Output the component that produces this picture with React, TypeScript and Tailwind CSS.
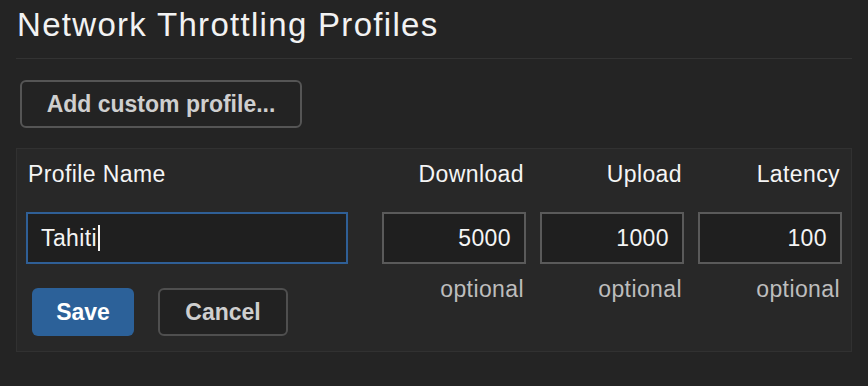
const font = "font-['Liberation_Sans',Arial,sans-serif]";

function NumberField({ value }: { value: string }) {
  return (
    <div className="flex h-[52px] items-center justify-end border-2 border-[#5a5a5a] bg-[#1f1f1f] pr-[13px] text-[#f4f4f4]">
      {value}
    </div>
  );
}

export default function App() {
  const columns = [
    { label: "Download", value: "5000" },
    { label: "Upload", value: "1000" },
    { label: "Latency", value: "100" },
  ];

  return (
    <div className={`${font} min-h-[386px] w-[868px] bg-[#242424] px-[16px] text-[23px] leading-[26px] tracking-[0.4px]`}>
      <div className="border-b border-[#333333] pb-[13px] pt-[5px]">
        <h1 className="pl-[1px] text-[33px] leading-[40px] tracking-[1.3px] text-[#f2f2f2]">Network Throttling Profiles</h1>
      </div>

      <button className="ml-[4px] mt-[21px] h-[48px] w-[282px] rounded-[6px] border-2 border-[#555555] bg-[#232323] font-bold tracking-normal text-[#cfcfcf]">
        Add custom profile...
      </button>

      <div className="mt-[20px] border border-[#313131] bg-[#282828] px-[9px] pb-[15px] pt-[12px]">
        <div className="grid grid-cols-[342px_144px_144px_144px] gap-x-[14px]">
          <div className="pl-[2px] text-[#f5f5f5]">Profile Name</div>
          {columns.map((c) => (
            <div key={c.label} className="pr-[2px] text-right text-[#f5f5f5]">
              {c.label}
            </div>
          ))}

          <div className="mt-[25px] w-[322px]">
            <div className="flex h-[52px] items-center border-2 border-[#2f5f96] bg-[#1f1f1f] pl-[13px] text-[#f4f4f4]">
              Tahiti
              <span className="ml-[1px] inline-block h-[26px] w-[1.5px] bg-[#f4f4f4]" />
            </div>
            <div className="ml-[6px] mt-[24px] flex gap-[24px]">
              <button className="h-[48px] w-[102px] rounded-[6px] bg-[#2c6199] font-bold tracking-normal text-white">
                Save
              </button>
              <button className="h-[48px] w-[130px] rounded-[6px] border-2 border-[#4f4f4f] bg-[#222222] font-bold tracking-normal text-[#cfcfcf]">
                Cancel
              </button>
            </div>
          </div>

          {columns.map((c) => (
            <div key={c.value} className="mt-[25px]">
              <NumberField value={c.value} />
              <div className="mt-[12px] pr-[2px] text-right text-[#bdbdbd]">optional</div>
            </div>
          ))}
        </div>
      </div>
    </div>
  );
}
